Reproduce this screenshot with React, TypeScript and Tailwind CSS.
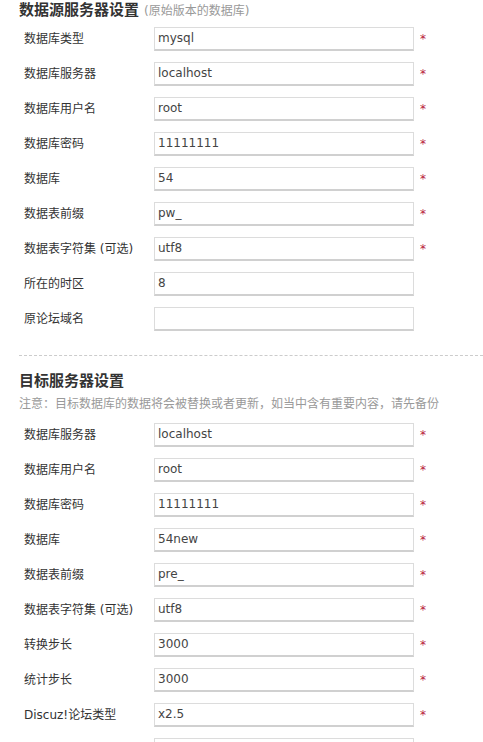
import React from 'react';

type Field = { label: string; value: string; required?: boolean };

const sourceFields: Field[] = [
  { label: '数据库类型', value: 'mysql', required: true },
  { label: '数据库服务器', value: 'localhost', required: true },
  { label: '数据库用户名', value: 'root', required: true },
  { label: '数据库密码', value: '11111111', required: true },
  { label: '数据库', value: '54', required: true },
  { label: '数据表前缀', value: 'pw_', required: true },
  { label: '数据表字符集 (可选)', value: 'utf8', required: true },
  { label: '所在的时区', value: '8' },
  { label: '原论坛域名', value: '' },
];

const targetFields: Field[] = [
  { label: '数据库服务器', value: 'localhost', required: true },
  { label: '数据库用户名', value: 'root', required: true },
  { label: '数据库密码', value: '11111111', required: true },
  { label: '数据库', value: '54new', required: true },
  { label: '数据表前缀', value: 'pre_', required: true },
  { label: '数据表字符集 (可选)', value: 'utf8', required: true },
  { label: '转换步长', value: '3000', required: true },
  { label: '统计步长', value: '3000', required: true },
  { label: 'Discuz!论坛类型', value: 'x2.5', required: true },
  { label: '', value: '' },
];

function Row({ field }: { field: Field }) {
  return (
    <div className="flex h-[35px] items-center pl-[5px]">
      <label className="w-[130px] shrink-0 text-[12px] text-[#333]">{field.label}</label>
      <input
        type="text"
        defaultValue={field.value}
        className="h-[24px] w-[260px] shrink-0 border border-[#dcdcdc] border-b-2 border-b-[#d0d0d0] bg-white px-[3px] text-[12px] text-[#444] outline-none"
      />
      {field.required && <span className="ml-[6px] text-[12px] text-[#b8183a]">*</span>}
    </div>
  );
}

export default function App() {
  return (
    <div
      className="bg-white pl-[19px] pt-0"
      style={{ fontFamily: '"DejaVu Sans", "Noto Sans CJK SC", sans-serif' }}
    >
      {/* 数据源 */}
      <div className="flex h-[21px] items-center">
        <span className="text-[15px] font-bold leading-none text-[#333]">数据源服务器设置</span>
        <span className="ml-[5px] text-[12px] leading-none text-[#999]">(原始版本的数据库)</span>
      </div>
      <div>
        {sourceFields.map((f, i) => (
          <Row key={i} field={f} />
        ))}
      </div>

      <div className="mt-[19px] border-t border-dashed border-[#cccccc]" />

      {/* 目标 */}
      <div className="mt-[14px] flex h-[22px] items-center">
        <span className="text-[15px] font-bold leading-none text-[#333]">目标服务器设置</span>
      </div>
      <div className="mt-[1px] flex h-[22px] items-center text-[12px] text-[#999]">
        注意：目标数据库的数据将会被替换或者更新，如当中含有重要内容，请先备份
      </div>
      <div className="mt-[2px]">
        {targetFields.map((f, i) => (
          <Row key={i} field={f} />
        ))}
      </div>
    </div>
  );
}
